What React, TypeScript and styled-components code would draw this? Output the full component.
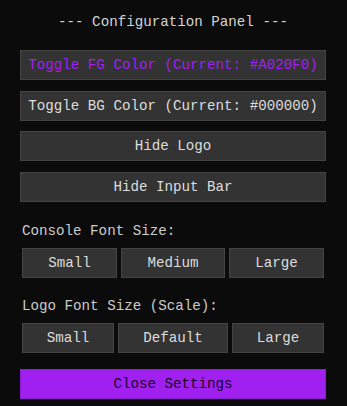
import styled, { createGlobalStyle } from 'styled-components'

const GlobalStyle = createGlobalStyle`
  html, body {
    margin: 0;
    padding: 0;
    background-color: #0b0b0b;
  }
  body {
    font-family: "Liberation Mono", "Courier New", monospace;
    font-size: 14.2px;
  }
`

const Panel = styled.div`
  width: 347px;
  height: 406px;
  box-sizing: border-box;
  padding: 14px 21px 0 20px;
  background-color: #0b0b0b;
  color: #ccc;
  display: flex;
  flex-direction: column;
`

const Title = styled.div`
  text-align: center;
  line-height: 16px;
  margin-bottom: 20px;
  color: #d4d4d4;
`

const Stack = styled.div`
  display: flex;
  flex-direction: column;
  gap: 10.67px;
`

const Button = styled.button<{ $fg?: string }>`
  box-sizing: border-box;
  height: 30px;
  padding: 0 6px;
  margin: 0;
  background-color: #333;
  border: 1px solid #444;
  color: ${(p) => p.$fg || '#ddd'};
  font-family: "Liberation Mono", "Courier New", monospace;
  font-size: 14.2px;
  line-height: 16px;
  text-align: center;
  white-space: nowrap;
  cursor: pointer;
`

const WideButton = styled(Button)`
  width: 100%;
`

const Section = styled.div<{ $top: number }>`
  margin-top: ${(p) => p.$top}px;
`

const Label = styled.div`
  line-height: 16px;
  padding-left: 2px;
  margin-bottom: 8.7px;
  color: #ccc;
`

const Row = styled.div`
  display: flex;
  gap: 4.5px;
  padding: 0 2px;
`

const SizeButton = styled(Button)`
  flex: 1 1 auto;
`

const CloseButton = styled(WideButton)`
  margin-top: 16.6px;
  background-color: #a020f0;
  border-color: #8e1bd6;
  color: #14041e;
`

const fgColor = '#A020F0'
const bgColor = '#000000'

export default function App() {
    return (
        <>
            <GlobalStyle />
            <Panel>
                <Title>--- Configuration Panel ---</Title>
                <Stack>
                    <WideButton $fg={fgColor}>Toggle FG Color (Current: {fgColor})</WideButton>
                    <WideButton>Toggle BG Color (Current: {bgColor})</WideButton>
                    <WideButton>Hide Logo</WideButton>
                    <WideButton>Hide Input Bar</WideButton>
                </Stack>
                <Section $top={21}>
                    <Label>Console Font Size:</Label>
                    <Row>
                        <SizeButton>Small</SizeButton>
                        <SizeButton>Medium</SizeButton>
                        <SizeButton>Large</SizeButton>
                    </Row>
                </Section>
                <Section $top={20.3}>
                    <Label>Logo Font Size (Scale):</Label>
                    <Row>
                        <SizeButton>Small</SizeButton>
                        <SizeButton>Default</SizeButton>
                        <SizeButton>Large</SizeButton>
                    </Row>
                </Section>
                <CloseButton>Close Settings</CloseButton>
            </Panel>
        </>
    )
}
